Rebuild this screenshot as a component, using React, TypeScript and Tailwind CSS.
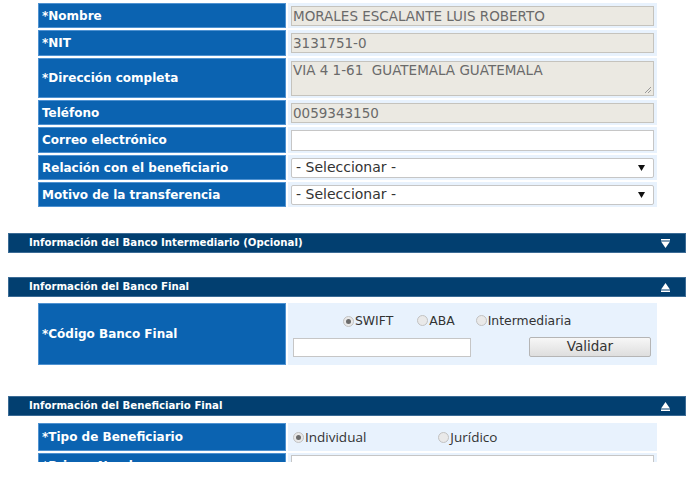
import React from 'react';

const font = { fontFamily: '"DejaVu Sans", Verdana, sans-serif' };

const Label: React.FC<{ text: string; h: string }> = ({ text, h }) => (
  <div
    className={`w-[248px] ${h} shrink-0 bg-[#0b63b1] border border-[#4f92d1] flex items-center pl-[3px] text-white font-bold text-[12px]`}
  >
    {text}
  </div>
);

const Cell: React.FC<{ h: string; children?: React.ReactNode; className?: string }> = ({ h, children, className }) => (
  <div className={`w-[369px] ${h} bg-[#e8f2fd] px-[3px] flex ${className || 'items-center'}`}>{children}</div>
);

const ReadOnly: React.FC<{ value: string }> = ({ value }) => (
  <div className="w-full h-[20px] bg-[#ebe9e2] border border-[#c5c3bd] text-[#6a6a6a] text-[13.5px] leading-[18px] pl-[1px]">
    {value}
  </div>
);

const Select: React.FC = () => (
  <div className="w-full h-[20px] bg-white border border-[#c6c6c6] rounded-[2px] flex items-center justify-between pl-[4px] pr-[8px] text-[#333] text-[14px]">
    <span>- Seleccionar -</span>
    <svg width="7" height="6" viewBox="0 0 7 6">
      <path d="M0 0h7L3.5 6z" fill="#111" />
    </svg>
  </div>
);

const Radio: React.FC<{ checked?: boolean }> = ({ checked }) => (
  <span className="inline-flex w-[11px] h-[11px] rounded-full border border-[#c2c2c2] bg-[#e9e9e9] items-center justify-center mr-[1px]">
    {checked && <span className="w-[5px] h-[5px] rounded-full bg-[#6b6b6b]" />}
  </span>
);

const SectionHeader: React.FC<{ title: string; open: boolean; className?: string }> = ({ title, open, className }) => (
  <div
    className={`ml-[8px] w-[678px] h-[20px] bg-[#023f70] border border-[#3b6b95] flex items-center justify-between pl-[20px] pr-[15px] text-white font-bold text-[10.2px] ${className || ''}`}
  >
    <span>{title}</span>
    {open ? (
      <svg width="9" height="9" viewBox="0 0 9 9">
        <path d="M4.5 0L9 6.5H0z" fill="#fff" />
        <rect x="0" y="7.5" width="9" height="1.5" fill="#fff" />
      </svg>
    ) : (
      <svg width="9" height="9" viewBox="0 0 9 9">
        <rect x="0" y="0" width="9" height="1.5" fill="#fff" />
        <path d="M0 2.5h9L4.5 9z" fill="#fff" />
      </svg>
    )}
  </div>
);

export default function App() {
  return (
    <div className="w-[700px] h-[482px] bg-white overflow-hidden" style={font}>
      <div className="h-[462px] overflow-hidden">
        {/* Datos del ordenante */}
        <div className="ml-[38px] mt-[3px] flex flex-col gap-[2px]">
          <div className="flex gap-[2px]">
            <Label text="*Nombre" h="h-[25px]" />
            <Cell h="h-[25px]">
              <ReadOnly value="MORALES ESCALANTE LUIS ROBERTO" />
            </Cell>
          </div>
          <div className="flex gap-[2px]">
            <Label text="*NIT" h="h-[26px]" />
            <Cell h="h-[26px]">
              <ReadOnly value="3131751-0" />
            </Cell>
          </div>
          <div className="flex gap-[2px]">
            <Label text="*Dirección completa" h="h-[40px]" />
            <Cell h="h-[40px]" className="items-start pt-[3px]">
              <div className="relative w-full h-[35px] bg-[#ebe9e2] border border-[#c5c3bd] text-[#6a6a6a] text-[13.5px] leading-[17px] pl-[1px] whitespace-pre">
                {'VIA 4 1-61  GUATEMALA GUATEMALA'}
                <svg className="absolute right-[1px] bottom-[1px]" width="8" height="8" viewBox="0 0 8 8">
                  <path d="M7 1L1 7M7 4L4 7" stroke="#999" strokeWidth="1" />
                </svg>
              </div>
            </Cell>
          </div>
          <div className="flex gap-[2px]">
            <Label text="Teléfono" h="h-[25px]" />
            <Cell h="h-[25px]">
              <ReadOnly value="0059343150" />
            </Cell>
          </div>
          <div className="flex gap-[2px]">
            <Label text="Correo electrónico" h="h-[26px]" />
            <Cell h="h-[26px]">
              <div className="w-full h-[21px] bg-white border border-[#c6c6c6]" />
            </Cell>
          </div>
          <div className="flex gap-[2px]">
            <Label text="Relación con el beneficiario" h="h-[25px]" />
            <Cell h="h-[25px]">
              <Select />
            </Cell>
          </div>
          <div className="flex gap-[2px]">
            <Label text="Motivo de la transferencia" h="h-[25px]" />
            <Cell h="h-[25px]">
              <Select />
            </Cell>
          </div>
        </div>

        <SectionHeader title="Información del Banco Intermediario (Opcional)" open={false} className="mt-[26px]" />

        <SectionHeader title="Información del Banco Final" open className="mt-[24px]" />

        <div className="ml-[38px] mt-[6px] flex gap-[2px]">
          <Label text="*Código Banco Final" h="h-[62px]" />
          <Cell h="h-[62px]" className="flex-col justify-center">
            <div className="flex items-center text-[12.4px] text-[#333] pl-[52px] h-[20px]">
              <Radio checked />
              <span>SWIFT</span>
              <span className="ml-[24px] flex items-center">
                <Radio />
                <span>ABA</span>
              </span>
              <span className="ml-[21px] flex items-center">
                <Radio />
                <span>Intermediaria</span>
              </span>
            </div>
            <div className="flex items-center justify-between mt-[6px] pr-[3px] pl-[2px]">
              <div className="w-[178px] h-[19px] bg-white border border-[#c6c6c6]" />
              <button className="w-[122px] h-[20px] border border-[#b5b5b5] rounded-[2px] bg-gradient-to-b from-[#f7f7f7] to-[#dedede] text-[13.5px] text-[#333] leading-none">
                Validar
              </button>
            </div>
          </Cell>
        </div>

        <SectionHeader title="Información del Beneficiario Final" open className="mt-[31px]" />

        <div className="ml-[38px] mt-[7px] flex flex-col gap-[2px]">
          <div className="flex gap-[2px]">
            <Label text="*Tipo de Beneficiario" h="h-[28px]" />
            <Cell h="h-[28px]">
              <div
                className="flex items-center text-[13.5px] text-[#333] pl-[2px]"
                style={{ fontFamily: '"Open Sans", "Noto Sans", sans-serif' }}
              >
                <Radio checked />
                <span>Individual</span>
                <span className="ml-[72px] flex items-center">
                  <Radio />
                  <span>Jurídico</span>
                </span>
              </div>
            </Cell>
          </div>
          <div className="flex gap-[2px]">
            <Label text="*Primer Nombre" h="h-[25px]" />
            <Cell h="h-[25px]">
              <div className="w-full h-[21px] bg-white border border-[#c6c6c6]" />
            </Cell>
          </div>
        </div>
      </div>
    </div>
  );
}
